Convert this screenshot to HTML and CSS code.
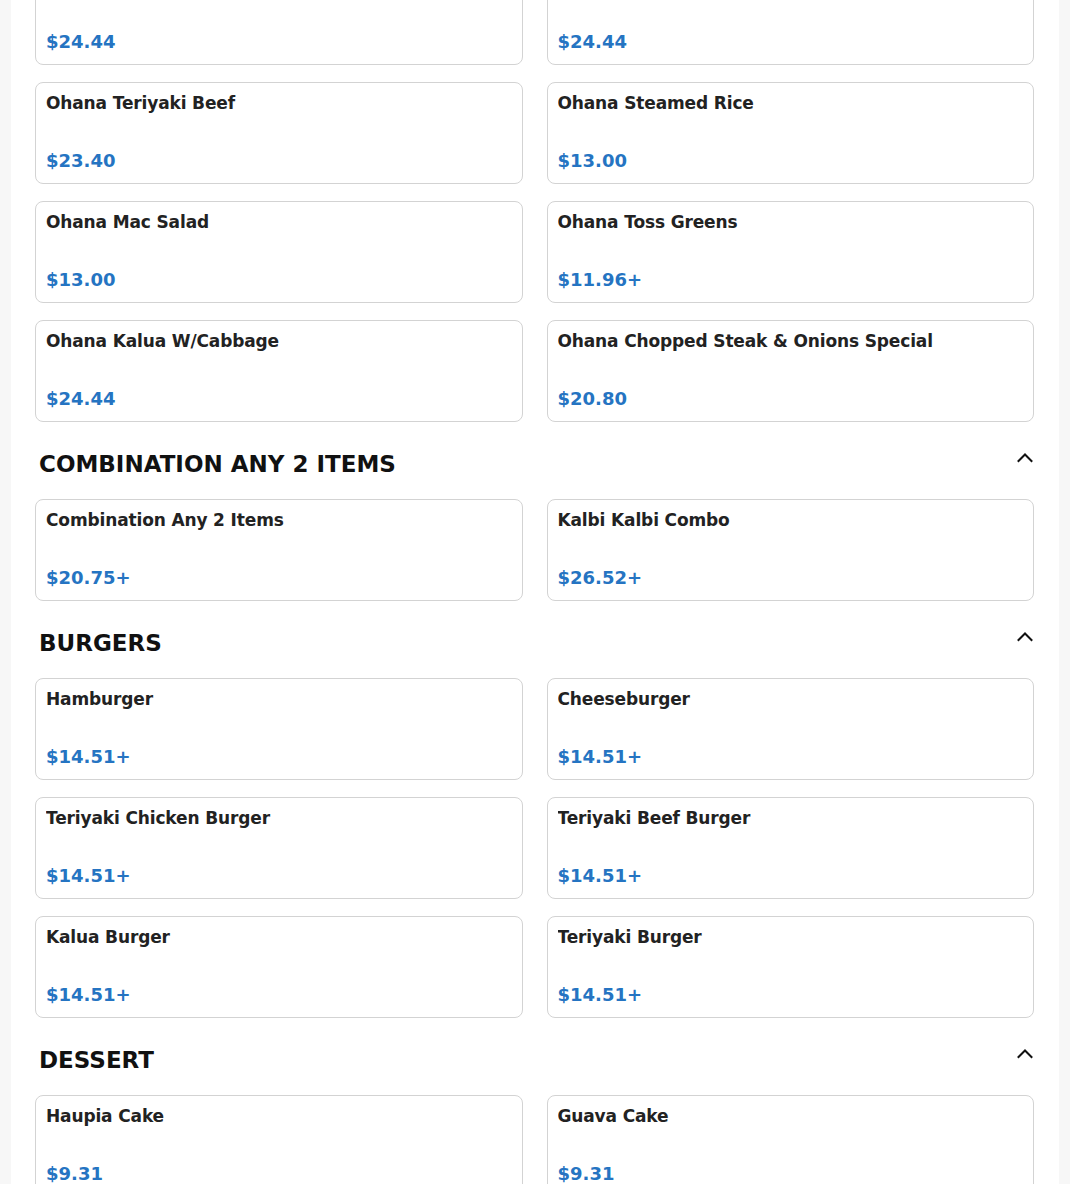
FILE: index.html
```html
<!DOCTYPE html>
<html lang="en">
<head>
<meta charset="utf-8">
<title>Menu</title>
<link rel="stylesheet" href="styles.css">
</head>
<body>
<main class="menu">
  <section class="section section-scrolled">
    <div class="grid">
      <div class="card"><div class="card-title">Ohana Kalbi</div><div class="card-price">$24.44</div></div>
      <div class="card"><div class="card-title">Ohana Kalbi Short Ribs</div><div class="card-price">$24.44</div></div>
      <div class="card"><div class="card-title">Ohana Teriyaki Beef</div><div class="card-price">$23.40</div></div>
      <div class="card"><div class="card-title">Ohana Steamed Rice</div><div class="card-price">$13.00</div></div>
      <div class="card"><div class="card-title">Ohana Mac Salad</div><div class="card-price">$13.00</div></div>
      <div class="card"><div class="card-title">Ohana Toss Greens</div><div class="card-price">$11.96+</div></div>
      <div class="card"><div class="card-title">Ohana Kalua W/Cabbage</div><div class="card-price">$24.44</div></div>
      <div class="card"><div class="card-title">Ohana Chopped Steak &amp; Onions Special</div><div class="card-price">$20.80</div></div>
    </div>
  </section>

  <section class="section">
    <div class="section-head">
      <h2 class="section-title">COMBINATION ANY 2 ITEMS</h2>
      <svg class="chevron" width="20" height="20" viewBox="0 0 20 20" aria-hidden="true"><path d="M3.5 13 L10 6.5 L16.5 13" fill="none" stroke="#111" stroke-width="2" stroke-linecap="square"/></svg>
    </div>
    <div class="grid">
      <div class="card"><div class="card-title">Combination Any 2 Items</div><div class="card-price">$20.75+</div></div>
      <div class="card"><div class="card-title">Kalbi Kalbi Combo</div><div class="card-price">$26.52+</div></div>
    </div>
  </section>

  <section class="section">
    <div class="section-head">
      <h2 class="section-title">BURGERS</h2>
      <svg class="chevron" width="20" height="20" viewBox="0 0 20 20" aria-hidden="true"><path d="M3.5 13 L10 6.5 L16.5 13" fill="none" stroke="#111" stroke-width="2" stroke-linecap="square"/></svg>
    </div>
    <div class="grid">
      <div class="card"><div class="card-title">Hamburger</div><div class="card-price">$14.51+</div></div>
      <div class="card"><div class="card-title">Cheeseburger</div><div class="card-price">$14.51+</div></div>
      <div class="card"><div class="card-title">Teriyaki Chicken Burger</div><div class="card-price">$14.51+</div></div>
      <div class="card"><div class="card-title">Teriyaki Beef Burger</div><div class="card-price">$14.51+</div></div>
      <div class="card"><div class="card-title">Kalua Burger</div><div class="card-price">$14.51+</div></div>
      <div class="card"><div class="card-title">Teriyaki Burger</div><div class="card-price">$14.51+</div></div>
    </div>
  </section>

  <section class="section">
    <div class="section-head">
      <h2 class="section-title">DESSERT</h2>
      <svg class="chevron" width="20" height="20" viewBox="0 0 20 20" aria-hidden="true"><path d="M3.5 13 L10 6.5 L16.5 13" fill="none" stroke="#111" stroke-width="2" stroke-linecap="square"/></svg>
    </div>
    <div class="grid">
      <div class="card"><div class="card-title">Haupia Cake</div><div class="card-price">$9.31</div></div>
      <div class="card"><div class="card-title">Guava Cake</div><div class="card-price">$9.31</div></div>
    </div>
  </section>
</main>
</body>
</html>
```

FILE: styles.css
```css
html, body {
  margin: 0;
  padding: 0;
}
body {
  background: #f7f7f7;
  font-family: "DejaVu Sans", Verdana, sans-serif;
  color: #1a1a1a;
  overflow: hidden;
}
.menu {
  width: 1048px;
  margin: 0 auto;
  box-sizing: border-box;
  padding: 0 25px 40px 24px;
  background: #ffffff;
  min-height: 1300px;
}
.section-scrolled {
  margin-top: -37px;
}
.section-head {
  display: flex;
  justify-content: space-between;
  align-items: flex-start;
  padding-left: 4px;
  margin: 28px 0 21px;
}
.section-title {
  margin: 0;
  font-size: 23px;
  line-height: 28px;
  font-weight: bold;
  color: #111;
}
.chevron {
  display: block;
  margin-top: -2px;
  margin-right: -1px;
}
.grid {
  display: grid;
  grid-template-columns: 1fr 1fr;
  column-gap: 24px;
  row-gap: 17px;
}
.card {
  box-sizing: border-box;
  height: 102px;
  border: 1px solid #d3d3d3;
  border-radius: 8px;
  padding: 11px 10px 12px;
  display: flex;
  flex-direction: column;
  justify-content: space-between;
}
.card-title {
  font-size: 17px;
  line-height: 19px;
  font-weight: bold;
  letter-spacing: -0.14px;
  color: #222;
  white-space: nowrap;
  overflow: hidden;
}
.card-price {
  font-size: 18px;
  line-height: 20px;
  font-weight: bold;
  color: #2574c2;
}
```
